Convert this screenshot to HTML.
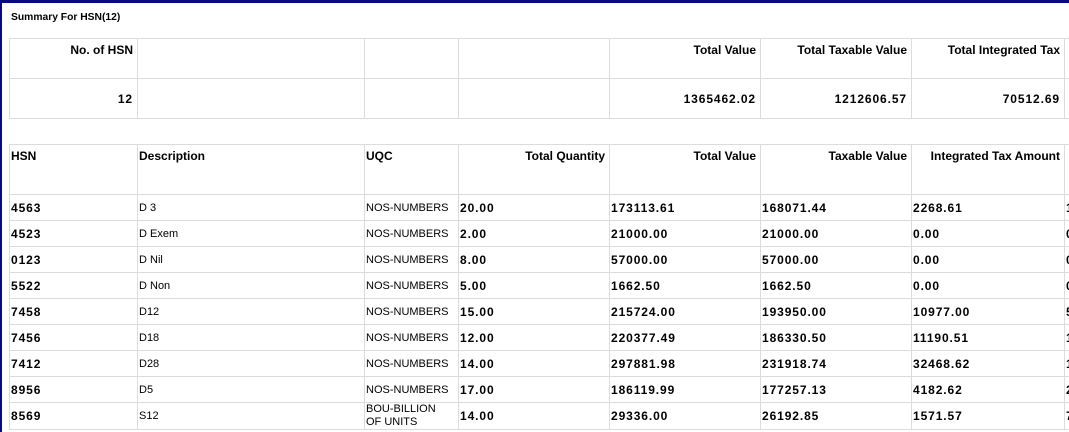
<!DOCTYPE html>
<html><head><style>
body{margin:0;width:1069px;height:432px;overflow:hidden;background:#fff;font-family:"Liberation Sans",sans-serif;font-size:11px;color:#000}
.frame{position:absolute;left:0;top:0;width:1069px;height:432px;border-top:3px solid #0a0a80;border-left:2px solid #0a0a80;box-sizing:border-box;z-index:5;pointer-events:none}
.title{position:absolute;left:11px;top:12px;font-weight:bold;font-size:10.3px}
table{position:absolute;left:9px;border-collapse:collapse;table-layout:fixed;width:1075px;font-size:11px}
td{border:1px solid #dcdcdc;padding:1px 4px 0 1px;white-space:nowrap;overflow:hidden;line-height:13px;font-size:11px}
.h td{vertical-align:top;padding-top:5px;font-weight:bold;font-size:12px}
.r{text-align:right}
td.n,.n td{font-weight:bold;letter-spacing:0.9px;font-size:12px}
</style></head><body>
<div class="frame"></div>
<div class="title">Summary For HSN(12)</div>
<table style="top:38px">
<colgroup><col style="width:128px"><col style="width:227px"><col style="width:94px"><col style="width:151px"><col style="width:151px"><col style="width:151px"><col style="width:153px"><col style="width:20px"></colgroup>
<tr class="h" style="height:40px"><td class="r">No. of HSN</td><td></td><td></td><td></td><td class="r">Total Value</td><td class="r">Total Taxable Value</td><td class="r">Total Integrated Tax</td><td></td></tr>
<tr style="height:40px" class="n"><td class="r">12</td><td></td><td></td><td></td><td class="r">1365462.02</td><td class="r">1212606.57</td><td class="r">70512.69</td><td></td></tr>
</table>
<table style="top:144px">
<colgroup><col style="width:128px"><col style="width:227px"><col style="width:94px"><col style="width:151px"><col style="width:151px"><col style="width:151px"><col style="width:153px"><col style="width:20px"></colgroup>
<tr class="h" style="height:50px"><td>HSN</td><td>Description</td><td>UQC</td><td class="r">Total Quantity</td><td class="r">Total Value</td><td class="r">Taxable Value</td><td class="r">Integrated Tax Amount</td><td></td></tr>
<tr style="height:26px"><td class="n">4563</td><td>D 3</td><td>NOS-NUMBERS</td><td class="n">20.00</td><td class="n">173113.61</td><td class="n">168071.44</td><td class="n">2268.61</td><td class="n">1</td></tr>
<tr style="height:26px"><td class="n">4523</td><td>D Exem</td><td>NOS-NUMBERS</td><td class="n">2.00</td><td class="n">21000.00</td><td class="n">21000.00</td><td class="n">0.00</td><td class="n">0</td></tr>
<tr style="height:26px"><td class="n">0123</td><td>D Nil</td><td>NOS-NUMBERS</td><td class="n">8.00</td><td class="n">57000.00</td><td class="n">57000.00</td><td class="n">0.00</td><td class="n">0</td></tr>
<tr style="height:26px"><td class="n">5522</td><td>D Non</td><td>NOS-NUMBERS</td><td class="n">5.00</td><td class="n">1662.50</td><td class="n">1662.50</td><td class="n">0.00</td><td class="n">0</td></tr>
<tr style="height:26px"><td class="n">7458</td><td>D12</td><td>NOS-NUMBERS</td><td class="n">15.00</td><td class="n">215724.00</td><td class="n">193950.00</td><td class="n">10977.00</td><td class="n">5</td></tr>
<tr style="height:26px"><td class="n">7456</td><td>D18</td><td>NOS-NUMBERS</td><td class="n">12.00</td><td class="n">220377.49</td><td class="n">186330.50</td><td class="n">11190.51</td><td class="n">1</td></tr>
<tr style="height:26px"><td class="n">7412</td><td>D28</td><td>NOS-NUMBERS</td><td class="n">14.00</td><td class="n">297881.98</td><td class="n">231918.74</td><td class="n">32468.62</td><td class="n">1</td></tr>
<tr style="height:26px"><td class="n">8956</td><td>D5</td><td>NOS-NUMBERS</td><td class="n">17.00</td><td class="n">186119.99</td><td class="n">177257.13</td><td class="n">4182.62</td><td class="n">2</td></tr>
<tr style="height:26px"><td class="n">8569</td><td>S12</td><td style="line-height:13px;vertical-align:top;padding-top:0">BOU-BILLION<br>OF UNITS</td><td class="n">14.00</td><td class="n">29336.00</td><td class="n">26192.85</td><td class="n">1571.57</td><td class="n">7</td></tr>
</table>
</body></html>
